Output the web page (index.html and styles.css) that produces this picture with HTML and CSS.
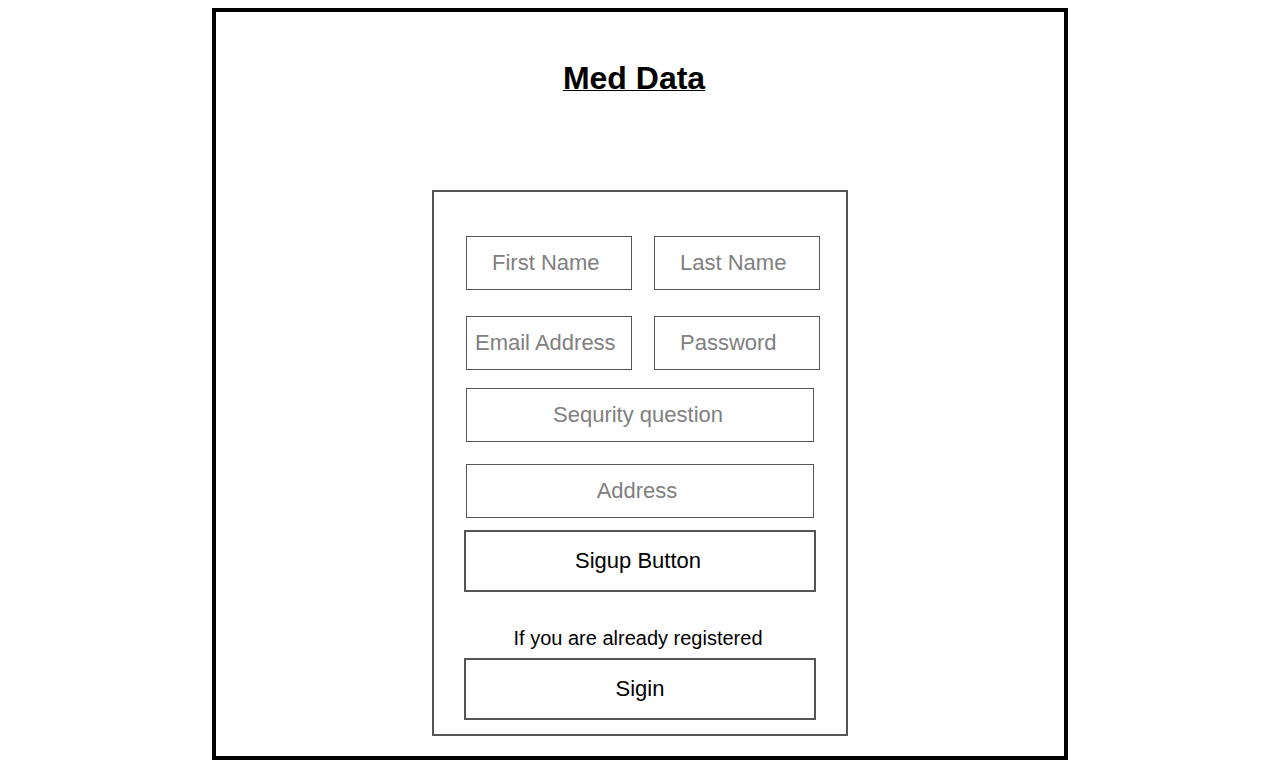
FILE: index.html
```html
<!DOCTYPE html>
<html lang="en">
<head>
<meta charset="utf-8">
<meta name="viewport" content="width=device-width, initial-scale=1">
<title>Med Data</title>
<link rel="stylesheet" href="styles.css">
</head>
<body>
<main class="frame">
  <h1 class="title">Med Data</h1>
  <form class="card">
    <div class="pair">
      <input class="field field-name" type="text" placeholder="First Name" aria-label="First Name">
      <input class="field field-name" type="text" placeholder="Last Name" aria-label="Last Name">
    </div>
    <div class="pair pair-account">
      <input class="field field-email" type="email" placeholder="Email Address" aria-label="Email Address">
      <input class="field field-name" type="password" placeholder="Password" aria-label="Password">
    </div>
    <input class="field field-wide" type="text" placeholder="Sequrity question" aria-label="Sequrity question">
    <input class="field field-wide field-address" type="text" placeholder="Address" aria-label="Address">
    <button class="action" type="submit">Sigup Button</button>
    <p class="note">If you are already registered</p>
    <button class="action action-signin" type="button">Sigin</button>
  </form>
</main>
</body>
</html>
```

FILE: styles.css
```css
* {
  box-sizing: border-box;
}

body {
  margin: 0;
  padding: 8px;
  background: #fff;
  color: #000;
  font-family: "Liberation Sans", Arial, sans-serif;
}

.frame {
  display: flex;
  flex-direction: column;
  align-items: center;
  max-width: 856px;
  margin: 0 auto;
  padding: 48px 20px 20px;
  border: 4px solid #000;
}

.title {
  margin: 0 0 94px;
  padding-right: 12px;
  font-size: 32px;
  line-height: 36px;
  text-decoration: underline;
  text-decoration-thickness: 1px;
}

.card {
  display: flex;
  flex-direction: column;
  width: 100%;
  max-width: 416px;
  padding: 44px 30px 14px;
  border: 2px solid #555;
}

.pair {
  display: grid;
  grid-template-columns: 1fr 1fr;
  gap: 22px;
  margin: 0 -4px 26px 2px;
}

.pair-account {
  margin-bottom: 18px;
}

.field {
  min-width: 0;
  height: 54px;
  border: 1px solid #555;
  border-radius: 0;
  background: #fff;
  color: #000;
  font-family: inherit;
  font-size: 22px;
}

.field::placeholder {
  color: #808080;
  opacity: 1;
}

.field-name {
  padding: 0 8px 0 25px;
}

.field-email {
  padding: 0 8px;
}

.field-wide {
  margin: 0 2px 22px;
  padding: 0 12px 0 8px;
  text-align: center;
}

.field-address {
  margin-bottom: 12px;
  padding-right: 14px;
}

.action {
  height: 62px;
  padding: 0 4px 0 0;
  border: 2px solid #555;
  background: #fff;
  color: #000;
  font-family: inherit;
  font-size: 22px;
}

.action-signin {
  padding-right: 0;
}

.note {
  margin: 34px 0 8px;
  padding-right: 4px;
  font-size: 20px;
  line-height: 24px;
  text-align: center;
}
```
